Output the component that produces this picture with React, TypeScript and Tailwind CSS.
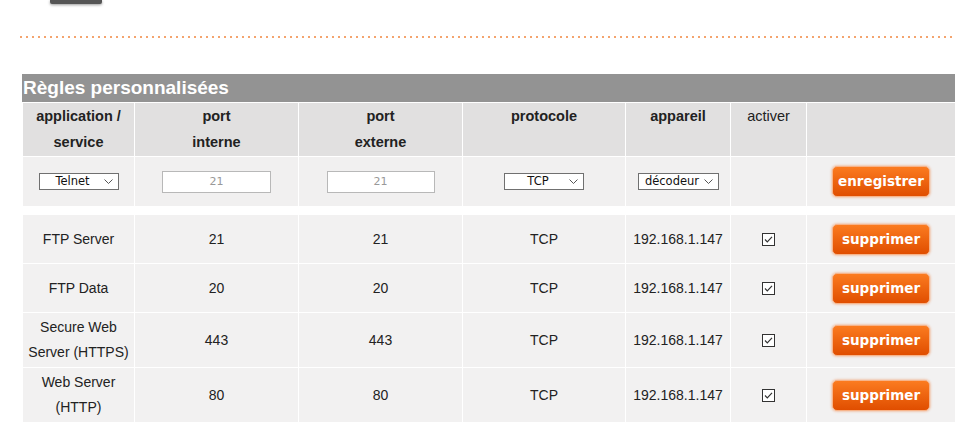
import React from 'react';

const rules = [
  { name: ['FTP Server'], internal: '21', external: '21' },
  { name: ['FTP Data'], internal: '20', external: '20' },
  { name: ['Secure Web', 'Server (HTTPS)'], internal: '443', external: '443' },
  { name: ['Web Server', '(HTTP)'], internal: '80', external: '80' },
];

const Chevron = () => (
  <svg className="pointer-events-none absolute right-[5px] top-[5px]" width="9" height="5" viewBox="0 0 9 5">
    <path d="M0.5 0.5 L4.5 4.5 L8.5 0.5" fill="none" stroke="#555" strokeWidth="1" />
  </svg>
);

const FakeSelect = ({ value, width }: { value: string; width: string }) => (
  <div
    role="combobox"
    className={`relative mx-auto h-[17px] ${width} border border-[#707070] bg-white pr-[12px] text-center font-['DejaVu_Sans',sans-serif] text-[11.5px] leading-[15px] text-[#111]`}
  >
    {value}
    <Chevron />
  </div>
);

const OrangeButton = ({ label }: { label: string }) => (
  <button className="mx-auto block h-[31px] w-[98px] rounded-[5px] border border-[#f7b48a] bg-[linear-gradient(to_bottom,#fb7b20,#e04e00)] font-['DejaVu_Sans',sans-serif] text-[13.5px] font-bold text-white shadow-[0_0_2px_1px_rgba(240,150,100,0.45)]">
    {label}
  </button>
);

const Check = () => (
  <svg width="13" height="13" viewBox="0 0 13 13" className="mx-auto block">
    <rect x="0.5" y="0.5" width="12" height="12" fill="#fff" stroke="#333" />
    <path d="M3 6.5 L5.3 8.8 L10 3.8" fill="none" stroke="#333" strokeWidth="1.2" />
  </svg>
);

export default function App() {
  const cell = 'border border-white text-center';
  return (
    <div className="min-h-[439px] w-[978px] bg-white font-['Liberation_Sans',Arial,sans-serif] text-[14px] text-[#222]">
      <div className="ml-[50px] h-[4px] w-[52px] rounded-b-[2px] bg-[#555] shadow-[0_1px_3px_rgba(0,0,0,0.4)]" />

      <div className="ml-[20px] mt-[32px] h-[2px] w-[932px] bg-[linear-gradient(to_right,#f4a46e_2px,transparent_2px)] bg-[length:6px_2px]" />

      <div className="ml-[22px] mt-[36px] w-[933px]">
        <div className="h-[28px] bg-[#939393] pl-[1px] text-[19px] font-bold leading-[28px] text-white">
          Règles personnalisées
        </div>
        <table className="w-full table-fixed border-collapse">
          <colgroup>
            <col className="w-[112px]" />
            <col className="w-[164px]" />
            <col className="w-[164px]" />
            <col className="w-[163px]" />
            <col className="w-[105px]" />
            <col className="w-[76px]" />
            <col className="w-[149px]" />
          </colgroup>
          <thead>
            <tr className="h-[54px] bg-[#e1e0e0] align-top text-[14.5px] leading-[26px]">
              <th className={`${cell} font-bold`}>application /<br />service</th>
              <th className={`${cell} font-bold`}>port<br />interne</th>
              <th className={`${cell} font-bold`}>port<br />externe</th>
              <th className={`${cell} font-bold`}>protocole</th>
              <th className={`${cell} font-bold`}>appareil</th>
              <th className={`${cell} font-normal`}>activer</th>
              <th className={cell}></th>
            </tr>
          </thead>
          <tbody>
            <tr className="h-[50px] bg-[#f1f0f0]">
              <td className={cell}>
                <FakeSelect value="Telnet" width="w-[80px]" />
              </td>
              <td className={cell}>
                <input
                  defaultValue="21"
                  className="mx-auto block h-[22px] w-[109px] border border-[#b8b8b8] bg-white text-center font-['DejaVu_Sans',sans-serif] text-[11px] text-[#999] outline-none"
                />
              </td>
              <td className={cell}>
                <input
                  defaultValue="21"
                  className="mx-auto block h-[22px] w-[108px] border border-[#b8b8b8] bg-white text-center font-['DejaVu_Sans',sans-serif] text-[11px] text-[#999] outline-none"
                />
              </td>
              <td className={cell}>
                <FakeSelect value="TCP" width="w-[80px]" />
              </td>
              <td className={cell}>
                <FakeSelect value="décodeur" width="w-[81px]" />
              </td>
              <td className={cell}></td>
              <td className={cell}>
                <OrangeButton label="enregistrer" />
              </td>
            </tr>
            <tr className="h-[8px] bg-white">
              <td colSpan={7}></td>
            </tr>
            {rules.map((r, i) => (
              <tr key={i} className={`${r.name.length > 1 ? 'h-[55px]' : 'h-[49px]'} bg-[#f2f1f1] leading-[25px]`}>
                <td className={cell}>
                  {r.name.map((line, j) => (
                    <div key={j}>{line}</div>
                  ))}
                </td>
                <td className={cell}>{r.internal}</td>
                <td className={cell}>{r.external}</td>
                <td className={cell}>TCP</td>
                <td className={cell}>192.168.1.147</td>
                <td className={cell}>
                  <Check />
                </td>
                <td className={cell}>
                  <OrangeButton label="supprimer" />
                </td>
              </tr>
            ))}
          </tbody>
        </table>
      </div>
    </div>
  );
}
